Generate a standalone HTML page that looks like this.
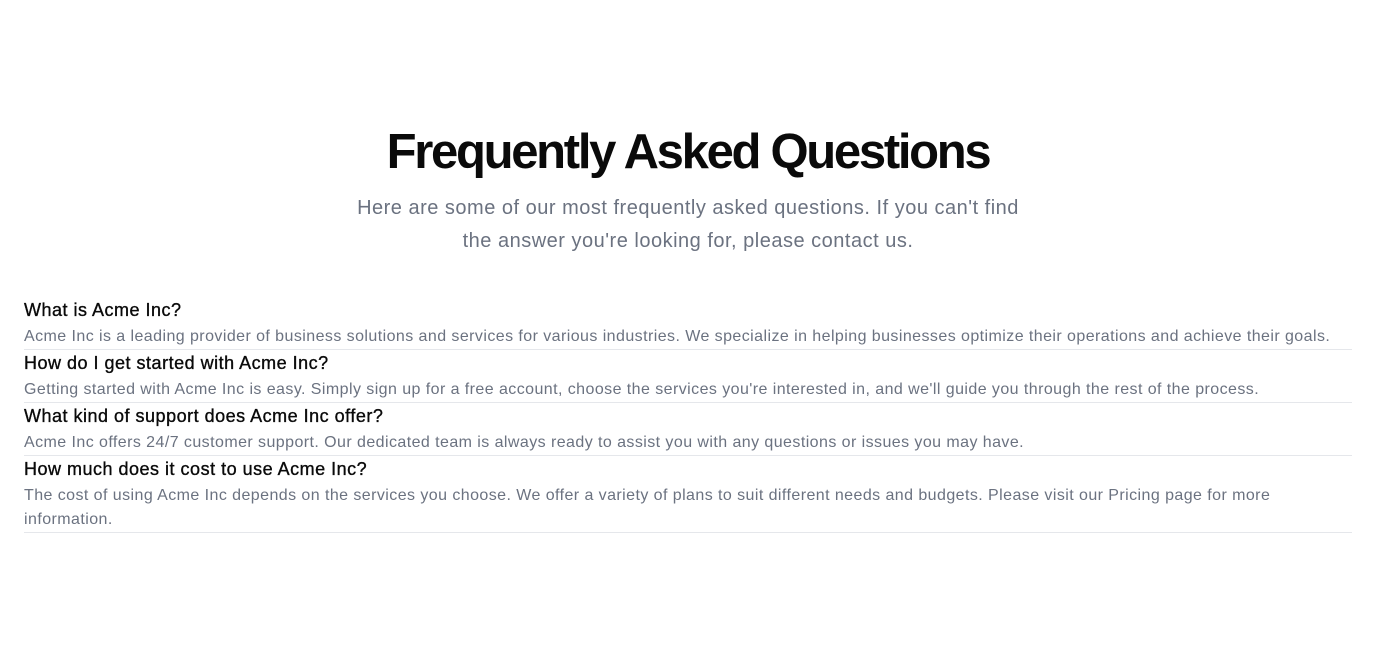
<!DOCTYPE html>
<html><head><meta charset="utf-8"><style>
body{margin:0;background:#fff;font-family:"Liberation Sans",sans-serif;width:1376px;height:661px;overflow:hidden}
h1{position:absolute;top:122px;left:0;width:1376px;margin:0;text-align:center;font-size:49px;line-height:60px;font-weight:700;letter-spacing:-2.3px;color:#0a0a0a}
.sub{position:absolute;top:192px;left:343px;width:690px;margin:0;text-align:center;font-size:20px;line-height:33px;letter-spacing:0.5px;color:#6b7280}
.faq{position:absolute;top:297px;left:24px;width:1328px}
.item{border-bottom:1px solid #e5e7eb}
.q{font-size:18px;line-height:27px;font-weight:400;letter-spacing:0.5px;-webkit-text-stroke:0.35px #0a0a0a;color:#0a0a0a}
.a{font-size:16px;line-height:24px;letter-spacing:0.43px;color:#6b7280;padding-top:1px}
</style></head><body>
<h1>Frequently Asked Questions</h1>
<p class="sub">Here are some of our most frequently asked questions. If you can't find the answer you're looking for, please contact us.</p>
<div class="faq">
<div class="item"><div class="q">What is Acme Inc?</div><div class="a">Acme Inc is a leading provider of business solutions and services for various industries. We specialize in helping businesses optimize their operations and achieve their goals.</div></div>
<div class="item"><div class="q">How do I get started with Acme Inc?</div><div class="a">Getting started with Acme Inc is easy. Simply sign up for a free account, choose the services you're interested in, and we'll guide you through the rest of the process.</div></div>
<div class="item"><div class="q">What kind of support does Acme Inc offer?</div><div class="a">Acme Inc offers 24/7 customer support. Our dedicated team is always ready to assist you with any questions or issues you may have.</div></div>
<div class="item"><div class="q">How much does it cost to use Acme Inc?</div><div class="a" style="width:1270px">The cost of using Acme Inc depends on the services you choose. We offer a variety of plans to suit different needs and budgets. Please visit our Pricing page for more<br>information.</div></div>
</div>
</body></html>
